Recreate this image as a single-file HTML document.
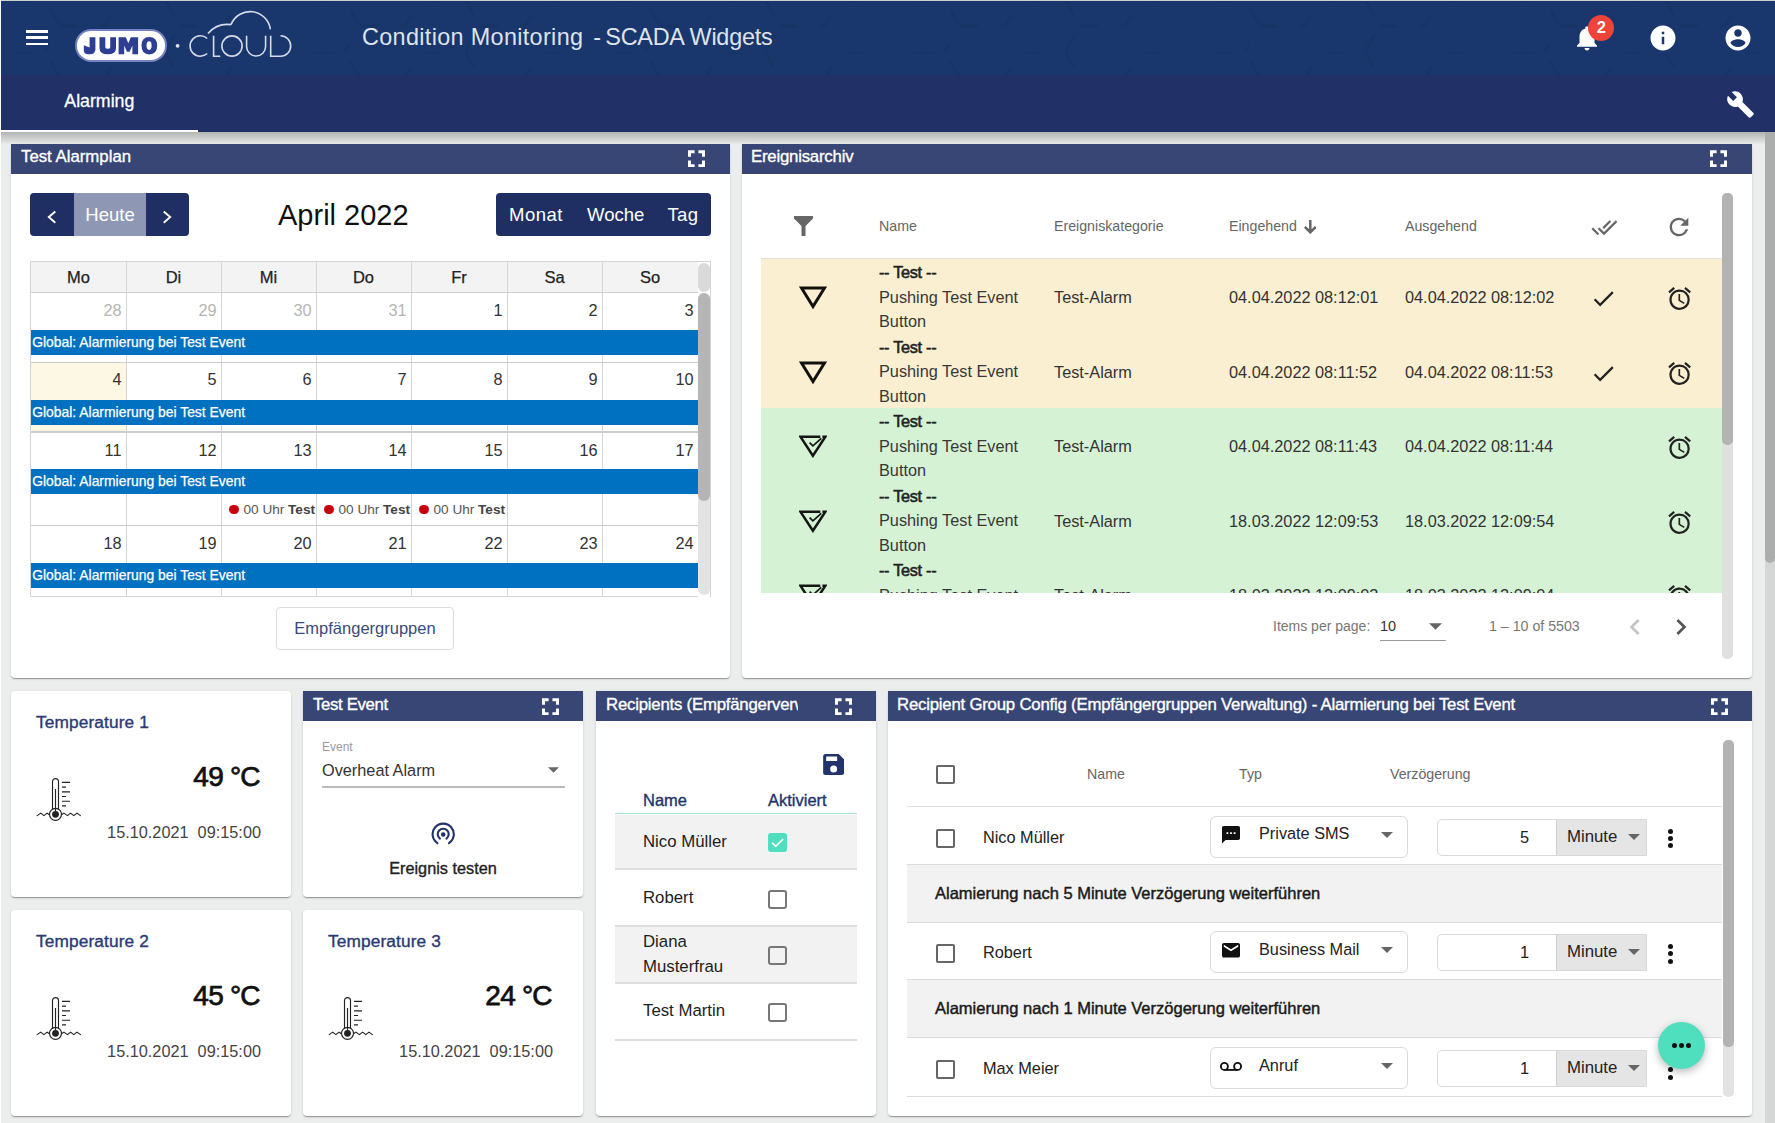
<!DOCTYPE html>
<html><head><meta charset="utf-8">
<style>
*{box-sizing:border-box;margin:0;padding:0}
html,body{width:1775px;height:1123px;overflow:hidden}
body{position:relative;background:#eceeed;font-family:"Liberation Sans",sans-serif;color:#222}
.a{position:absolute}
.t{position:absolute;white-space:nowrap}
.nav{left:0;top:0;width:1775px;height:75px;background:#19366d;border-top:1px solid #cfcfcf;border-left:1px solid #fff}
.tabs{left:0;top:75px;width:1775px;height:57px;background:#213066;border-left:1px solid #fff}
.shadow{left:1px;top:132px;width:1764px;height:12px;background:linear-gradient(#b2b3b3,#e2e3e3 90%,#eceeed)}
.card{position:absolute;background:#fff;border-radius:4px;box-shadow:0 2px 1px -1px rgba(0,0,0,.2),0 1px 1px 0 rgba(0,0,0,.14),0 1px 3px 0 rgba(0,0,0,.12)}
.ph{position:absolute;left:0;top:0;right:0;height:30px;background:#374674;border-radius:0}
.ph .tt{position:absolute;left:10px;top:0.4px;line-height:26px;color:#fff;font-size:16.8px;white-space:nowrap;letter-spacing:-0.22px;-webkit-text-stroke:0.35px #fff}
.fs{position:absolute;top:6px;width:17px;height:17.4px}
.ph2 .tt{top:0.9px}.ph2 .fs{top:6.8px;margin-left:0.8px}
</style></head><body>

<div class="a" style="left:0;top:0;width:1px;height:1123px;background:#fff;z-index:5"></div>
<div class="a nav"></div>
<svg class="a" style="left:0;top:0" width="1775" height="75">
<defs><pattern id="hex" width="300" height="52" patternUnits="userSpaceOnUse">
<path d="M15 0 L45 0 L60 26 L45 52 M60 26 L105 26 L120 0 L165 0 L180 26 L165 52 M180 26 L225 26 L240 0 L285 0" fill="none" stroke="#15305f" stroke-width="3" stroke-dasharray="18 22"/>
</pattern></defs>
<rect x="1" y="1" width="1774" height="74" fill="url(#hex)" opacity="0.4"/>
</svg>
<div class="a" style="left:25.8px;top:30.3px;width:22.2px;height:2.6px;background:#fff"></div>
<div class="a" style="left:25.8px;top:36.4px;width:22.2px;height:2.6px;background:#fff"></div>
<div class="a" style="left:25.8px;top:42.5px;width:22.2px;height:2.6px;background:#fff"></div>
<div class="a" style="left:75px;top:29px;width:92px;height:32.6px;border-radius:16.3px;background:#fff;border:2px solid #7583c0"></div>
<svg class="a" style="left:70px;top:24px" width="102" height="42" viewBox="70 24 102 42"><g fill="#2c3f92">
<path d="M89.6 37.2H95.4V49.2Q95.4 54.3 89.8 54.3H88.2Q83.8 54.3 83.8 50V45.2L89.6 47.6Z"/>
<path d="M99.5 37.2H105.3V47.2Q105.3 48.8 107.8 48.8Q110.2 48.8 110.2 47.2V37.2H116V48Q116 54.3 107.8 54.3Q99.5 54.3 99.5 48Z"/>
<path d="M118.6 54.2V37.2H125.8L128.3 43.2L130.8 37.2H138.1V54.2H132.4V45.5L129.6 51.8H127L124.2 45.5V54.2Z"/>
<path fill-rule="evenodd" d="M149.3 36.9Q157.2 36.9 157.2 45.6Q157.2 54.5 149.3 54.5Q141.5 54.5 141.5 45.6Q141.5 36.9 149.3 36.9ZM149.3 41.2Q146.5 41.2 146.5 45.6Q146.5 49.9 149.3 49.9Q151.6 49.9 151.6 45.6Q151.6 41.2 149.3 41.2Z"/>
</g></svg>
<svg class="a" style="left:170px;top:5px" width="130" height="60" viewBox="170 5 130 60">
<circle cx="177.6" cy="45.8" r="1.9" fill="#dfe4ee"/>
<g fill="none" stroke="#d5dbe8" stroke-width="1.6">
<path d="M207.2 38.5 A10.2 10.2 0 1 0 207.2 53.5"/>
<path d="M213.6 35.8 V56.2 H220.3"/>
<circle cx="232" cy="46" r="10.1"/>
<path d="M246.6 35.8 V46.5 A9.5 9.5 0 0 0 265.6 46.5 V35.8"/>
<path d="M270.7 35.8 V56.2 H280.5 A10.2 10.2 0 0 0 280.5 35.8"/>
<path d="M208 33.4 A26 26 0 0 1 231 24.6"/>
<path d="M231 24.6 A20.5 20.5 0 0 1 270.4 29.4"/>
</g>
</svg>
<div class="t" style="left:362px;top:22px;line-height:30px;font-size:23.4px;color:#dfe3ec;letter-spacing:0.34px">Condition Monitoring</div><div class="t" style="left:593.2px;top:22px;line-height:30px;font-size:23.4px;color:#dfe3ec">-</div><div class="t" style="left:605.3px;top:22px;line-height:30px;font-size:23.4px;color:#dfe3ec;letter-spacing:-0.25px">SCADA Widgets</div>
<!-- bell -->
<svg class="a" style="left:1572px;top:23px" width="30" height="30" viewBox="0 0 24 24"><path fill="#fff" d="M12 22c1.1 0 2-.9 2-2h-4c0 1.1.89 2 2 2zm6-6v-5c0-3.07-1.64-5.64-4.5-6.32V4c0-.83-.67-1.5-1.5-1.5s-1.5.67-1.5 1.5v.68C7.63 5.36 6 7.92 6 11v5l-2 2v1h16v-1l-2-2z"/></svg>
<div class="a" style="left:1588px;top:15px;width:26px;height:26px;border-radius:50%;background:#f0433a;color:#fff;font-size:16.5px;font-weight:bold;text-align:center;line-height:25px;padding-left:0.5px">2</div>
<!-- info -->
<svg class="a" style="left:1647.5px;top:23px" width="30" height="30" viewBox="0 0 24 24"><path fill="#fff" d="M12 2C6.48 2 2 6.48 2 12s4.48 10 10 10 10-4.48 10-10S17.52 2 12 2zm1 15h-2v-6h2v6zm0-8h-2V7h2v2z"/></svg>
<!-- account -->
<svg class="a" style="left:1723px;top:23px" width="30" height="30" viewBox="0 0 24 24"><path fill="#fff" d="M12 2C6.48 2 2 6.48 2 12s4.48 10 10 10 10-4.48 10-10S17.52 2 12 2zm0 3c1.66 0 3 1.34 3 3s-1.34 3-3 3-3-1.34-3-3 1.34-3 3-3zm0 14.2c-2.5 0-4.71-1.28-6-3.22.03-1.99 4-3.08 6-3.08 1.99 0 5.97 1.09 6 3.08-1.29 1.94-3.5 3.22-6 3.22z"/></svg>
<div class="a tabs"></div>
<div class="t" style="left:64.3px;top:89.3px;line-height:24px;font-size:17.75px;color:#fff;-webkit-text-stroke:0.3px #fff">Alarming</div>
<div class="a" style="left:1px;top:130px;width:197px;height:2px;background:#fff"></div>
<!-- wrench -->
<svg class="a" style="left:1726px;top:89.7px" width="29" height="29" viewBox="0 0 24 24"><path fill="#fff" d="M22.7 19l-9.1-9.1c.9-2.3.4-5-1.5-6.9-2-2-5-2.4-7.4-1.3L9 6 6 9 1.6 4.7C.4 7.1.9 10.1 2.9 12.1c1.9 1.9 4.6 2.4 6.9 1.5l9.1 9.1c.4.4 1 .4 1.4 0l2.3-2.3c.5-.4.5-1.1.1-1.4z"/></svg>
<div class="a shadow"></div>

<div class="card" style="left:11px;top:144px;width:719px;height:534px">
<div class="ph"><div class="tt" style="letter-spacing:0">Test Alarmplan</div><svg class="fs" style="left:677px" viewBox="0 0 17 17"><path fill="#fff" d="M0 0h6.6v3H3v3.6H0zM10.4 0H17v6.6h-3V3h-3.6zM0 10.4h3V14h3.6v3H0zM14 10.4h3V17h-6.6v-3H14z"/></svg></div>
<div class="a" style="left:19px;top:49px;width:159px;height:43px;border-radius:4px;overflow:hidden;background:#202f63"><div class="a" style="left:44px;top:0;width:72px;height:43px;background:#8e98b4"></div><svg class="a" style="left:0;top:0" width="44" height="43"><path d="M25.3 18.5L18.8 24L25.3 29.7" fill="none" stroke="#fff" stroke-width="1.9"/></svg><div class="t" style="left:44px;width:72px;top:0;line-height:43px;text-align:center;color:#fff;font-size:18.5px">Heute</div><svg class="a" style="left:116px;top:0" width="43" height="43"><path d="M17.7 18.5L24.2 24L17.7 29.7" fill="none" stroke="#fff" stroke-width="1.9"/></svg></div>
<div class="t" style="left:267px;top:52.5px;line-height:36px;font-size:29px;color:#111">April 2022</div>
<div class="a" style="left:485px;top:49px;width:215px;height:43px;border-radius:4px;background:#202f63;color:#fff;font-size:18.5px"><div class="t" style="left:13px;top:0;line-height:43px;letter-spacing:0.5px">Monat</div><div class="t" style="left:91px;top:0;line-height:43px">Woche</div><div class="t" style="left:171.5px;top:0;line-height:43px;letter-spacing:0.3px">Tag</div></div>
<div class="a" style="left:19px;top:117px;width:681px;height:336px;overflow:hidden">
<div class="a" style="left:0;top:0;width:681px;height:1px;background:#d4d4d4"></div>
<div class="a" style="left:0;top:0;width:1px;height:336px;background:#d4d4d4"></div>
<div class="a" style="left:680px;top:1px;width:1px;height:335px;background:#d4d4d4"></div>
<div class="a" style="left:0;top:335px;width:681px;height:1px;background:#d4d4d4"></div>
<div class="a" style="left:1px;top:1px;width:667px;height:30px;background:#f3f3f3"></div>
<div class="a" style="left:1px;top:31px;width:667px;height:1px;background:#d0d0d0"></div>
<div class="t" style="left:1px;width:95px;top:1px;line-height:30px;text-align:center;font-size:16.5px;color:#222;-webkit-text-stroke:0.25px #222">Mo</div>
<div class="t" style="left:96px;width:95px;top:1px;line-height:30px;text-align:center;font-size:16.5px;color:#222;-webkit-text-stroke:0.25px #222">Di</div>
<div class="t" style="left:191px;width:95px;top:1px;line-height:30px;text-align:center;font-size:16.5px;color:#222;-webkit-text-stroke:0.25px #222">Mi</div>
<div class="t" style="left:286px;width:95px;top:1px;line-height:30px;text-align:center;font-size:16.5px;color:#222;-webkit-text-stroke:0.25px #222">Do</div>
<div class="t" style="left:381px;width:96px;top:1px;line-height:30px;text-align:center;font-size:16.5px;color:#222;-webkit-text-stroke:0.25px #222">Fr</div>
<div class="t" style="left:477px;width:95px;top:1px;line-height:30px;text-align:center;font-size:16.5px;color:#222;-webkit-text-stroke:0.25px #222">Sa</div>
<div class="t" style="left:572px;width:96px;top:1px;line-height:30px;text-align:center;font-size:16.5px;color:#222;-webkit-text-stroke:0.25px #222">So</div>
<div class="a" style="left:96.0px;top:1px;width:1px;height:335px;background:#d6d6d6"></div>
<div class="a" style="left:191.0px;top:1px;width:1px;height:335px;background:#d6d6d6"></div>
<div class="a" style="left:286.0px;top:1px;width:1px;height:335px;background:#d6d6d6"></div>
<div class="a" style="left:381.0px;top:1px;width:1px;height:335px;background:#d6d6d6"></div>
<div class="a" style="left:477.0px;top:1px;width:1px;height:335px;background:#d6d6d6"></div>
<div class="a" style="left:572.0px;top:1px;width:1px;height:335px;background:#d6d6d6"></div>
<div class="t" style="left:1px;width:90.5px;top:37.6px;line-height:22px;text-align:right;font-size:16.3px;color:#b5b5b5">28</div>
<div class="t" style="left:96px;width:90.5px;top:37.6px;line-height:22px;text-align:right;font-size:16.3px;color:#b5b5b5">29</div>
<div class="t" style="left:191px;width:90.5px;top:37.6px;line-height:22px;text-align:right;font-size:16.3px;color:#b5b5b5">30</div>
<div class="t" style="left:286px;width:90.5px;top:37.6px;line-height:22px;text-align:right;font-size:16.3px;color:#b5b5b5">31</div>
<div class="t" style="left:381px;width:91.5px;top:37.6px;line-height:22px;text-align:right;font-size:16.3px;color:#333">1</div>
<div class="t" style="left:477px;width:90.5px;top:37.6px;line-height:22px;text-align:right;font-size:16.3px;color:#333">2</div>
<div class="t" style="left:572px;width:91.5px;top:37.6px;line-height:22px;text-align:right;font-size:16.3px;color:#333">3</div>
<div class="a" style="left:1px;top:69.0px;width:667px;height:25.2px;background:#0070c0"><div class="t" style="left:1.2px;top:0;line-height:25px;font-size:13.9px;color:#fff;-webkit-text-stroke:0.25px #fff">Global: Alarmierung bei Test Event</div></div>
<div class="a" style="left:1px;top:102px;width:95px;height:68px;background:#fcf8e3"></div>
<div class="a" style="left:1px;top:101px;width:667px;height:1px;background:#cdcdcd"></div>
<div class="t" style="left:1px;width:90.5px;top:107.3px;line-height:22px;text-align:right;font-size:16.3px;color:#333">4</div>
<div class="t" style="left:96px;width:90.5px;top:107.3px;line-height:22px;text-align:right;font-size:16.3px;color:#333">5</div>
<div class="t" style="left:191px;width:90.5px;top:107.3px;line-height:22px;text-align:right;font-size:16.3px;color:#333">6</div>
<div class="t" style="left:286px;width:90.5px;top:107.3px;line-height:22px;text-align:right;font-size:16.3px;color:#333">7</div>
<div class="t" style="left:381px;width:91.5px;top:107.3px;line-height:22px;text-align:right;font-size:16.3px;color:#333">8</div>
<div class="t" style="left:477px;width:90.5px;top:107.3px;line-height:22px;text-align:right;font-size:16.3px;color:#333">9</div>
<div class="t" style="left:572px;width:91.5px;top:107.3px;line-height:22px;text-align:right;font-size:16.3px;color:#333">10</div>
<div class="a" style="left:1px;top:138.6px;width:667px;height:25.2px;background:#0070c0"><div class="t" style="left:1.2px;top:0;line-height:25px;font-size:13.9px;color:#fff;-webkit-text-stroke:0.25px #fff">Global: Alarmierung bei Test Event</div></div>
<div class="a" style="left:1px;top:170px;width:667px;height:2px;background:#cdcdcd"></div>
<div class="t" style="left:1px;width:90.5px;top:178.0px;line-height:22px;text-align:right;font-size:16.3px;color:#333">11</div>
<div class="t" style="left:96px;width:90.5px;top:178.0px;line-height:22px;text-align:right;font-size:16.3px;color:#333">12</div>
<div class="t" style="left:191px;width:90.5px;top:178.0px;line-height:22px;text-align:right;font-size:16.3px;color:#333">13</div>
<div class="t" style="left:286px;width:90.5px;top:178.0px;line-height:22px;text-align:right;font-size:16.3px;color:#333">14</div>
<div class="t" style="left:381px;width:91.5px;top:178.0px;line-height:22px;text-align:right;font-size:16.3px;color:#333">15</div>
<div class="t" style="left:477px;width:90.5px;top:178.0px;line-height:22px;text-align:right;font-size:16.3px;color:#333">16</div>
<div class="t" style="left:572px;width:91.5px;top:178.0px;line-height:22px;text-align:right;font-size:16.3px;color:#333">17</div>
<div class="a" style="left:1px;top:208.1px;width:667px;height:25.2px;background:#0070c0"><div class="t" style="left:1.2px;top:0;line-height:25px;font-size:13.9px;color:#fff;-webkit-text-stroke:0.25px #fff">Global: Alarmierung bei Test Event</div></div>
<div class="a" style="left:1px;top:264px;width:667px;height:1px;background:#cdcdcd"></div>
<div class="t" style="left:1px;width:90.5px;top:270.7px;line-height:22px;text-align:right;font-size:16.3px;color:#333">18</div>
<div class="t" style="left:96px;width:90.5px;top:270.7px;line-height:22px;text-align:right;font-size:16.3px;color:#333">19</div>
<div class="t" style="left:191px;width:90.5px;top:270.7px;line-height:22px;text-align:right;font-size:16.3px;color:#333">20</div>
<div class="t" style="left:286px;width:90.5px;top:270.7px;line-height:22px;text-align:right;font-size:16.3px;color:#333">21</div>
<div class="t" style="left:381px;width:91.5px;top:270.7px;line-height:22px;text-align:right;font-size:16.3px;color:#333">22</div>
<div class="t" style="left:477px;width:90.5px;top:270.7px;line-height:22px;text-align:right;font-size:16.3px;color:#333">23</div>
<div class="t" style="left:572px;width:91.5px;top:270.7px;line-height:22px;text-align:right;font-size:16.3px;color:#333">24</div>
<div class="a" style="left:1px;top:301.7px;width:667px;height:25.2px;background:#0070c0"><div class="t" style="left:1.2px;top:0;line-height:25px;font-size:13.9px;color:#fff;-webkit-text-stroke:0.25px #fff">Global: Alarmierung bei Test Event</div></div>
<div class="t" style="left:191px;top:240px;line-height:18px;font-size:13.6px;color:#555"><span style="display:inline-block;width:9.5px;height:9.5px;border-radius:50%;background:#c8000b;margin:0 5px 0 8px;vertical-align:0px"></span>00 Uhr <b style="color:#444">Test</b></div>
<div class="t" style="left:286px;top:240px;line-height:18px;font-size:13.6px;color:#555"><span style="display:inline-block;width:9.5px;height:9.5px;border-radius:50%;background:#c8000b;margin:0 5px 0 8px;vertical-align:0px"></span>00 Uhr <b style="color:#444">Test</b></div>
<div class="t" style="left:381px;top:240px;line-height:18px;font-size:13.6px;color:#555"><span style="display:inline-block;width:9.5px;height:9.5px;border-radius:50%;background:#c8000b;margin:0 5px 0 8px;vertical-align:0px"></span>00 Uhr <b style="color:#444">Test</b></div>
<div class="a" style="left:668px;top:1px;width:12px;height:335px;background:#fff"></div>
<div class="a" style="left:668px;top:2px;width:12px;height:29px;border-radius:6px;background:#dadada"></div>
<div class="a" style="left:668px;top:32px;width:12px;height:302px;border-radius:6px;background:#e3e3e3"></div>
<div class="a" style="left:668px;top:32px;width:12px;height:208px;border-radius:6px;background:#b5b5b5"></div>
</div>
<div class="a" style="left:265px;top:463px;width:178px;height:43px;border:1px solid #dcdcdc;border-radius:4px"><div class="t" style="left:0;width:176px;text-align:center;top:0;line-height:41px;font-size:16.5px;color:#3a4a7e">Empfängergruppen</div></div>
</div>
<div class="card" style="left:742px;top:144px;width:1010px;height:534px">
<div class="ph"><div class="tt" style="left:9px">Ereignisarchiv</div><svg class="fs" style="left:968px" viewBox="0 0 17 17"><path fill="#fff" d="M0 0h6.6v3H3v3.6H0zM10.4 0H17v6.6h-3V3h-3.6zM0 10.4h3V14h3.6v3H0zM14 10.4h3V17h-6.6v-3H14z"/></svg></div>
<svg class="a" style="left:52px;top:72px" width="19" height="20" viewBox="0 0 19 20"><path fill="#666" d="M0 0h19v2.5L11.5 10v10h-4V10L0 2.5z"/></svg>
<div class="t" style="left:137px;top:72px;line-height:20px;font-size:14.2px;color:#666">Name</div>
<div class="t" style="left:312px;top:72px;line-height:20px;font-size:14.2px;color:#666">Ereigniskategorie</div>
<div class="t" style="left:487px;top:72px;line-height:20px;font-size:14.2px;color:#666">Eingehend</div>
<div class="t" style="left:663px;top:72px;line-height:20px;font-size:14.2px;color:#666">Ausgehend</div>
<svg class="a" style="left:561.6px;top:76.3px" width="12.6" height="14.2" viewBox="0 0 12.6 14.2"><path fill="#666" d="M5.05 0H7.55V9.3L10.9 6L12.6 7.8L6.3 14.1L0 7.8L1.7 6L5.05 9.3Z"/></svg>
<svg class="a" style="left:848.5px;top:69.7px" width="26.8" height="26.8" viewBox="0 0 24 24"><path fill="#666" d="M18 7l-1.41-1.41-6.34 6.34 1.41 1.41L18 7zm4.24-1.41L11.66 16.17 7.48 12l-1.41 1.41L11.66 19l12-12-1.42-1.41zM.41 13.41L6 19l1.41-1.41L1.83 12 .41 13.41z"/></svg>
<svg class="a" style="left:923.4px;top:68.9px" width="28" height="28" viewBox="0 0 24 24"><path fill="#666" d="M17.65 6.35A7.958 7.958 0 0 0 12 4c-4.42 0-7.99 3.58-7.99 8s3.57 8 7.99 8c3.73 0 6.84-2.55 7.73-6h-2.08A5.99 5.99 0 0 1 12 18c-3.31 0-6-2.69-6-6s2.69-6 6-6c1.66 0 3.14.69 4.22 1.78L13 11h7V4l-2.35 2.35z"/></svg>
<div class="a" style="left:19px;top:114px;width:961px;height:1px;background:#e0e0e0"></div>
<div class="a" style="left:19px;top:115px;width:961px;height:334px;overflow:hidden">
<div class="a" style="left:0;top:0.0px;width:961px;height:74.5px;background:#faefd1">
<svg class="a" style="left:38px;top:27px" width="28" height="23" viewBox="0 0 28 23"><path fill="none" stroke="#111" stroke-width="3" stroke-linejoin="miter" d="M2.5 2H25.5L14 20.5Z"/></svg>
<div class="t" style="left:118px;top:1px;line-height:24.7px;font-size:16.3px;color:#383838"><span style="color:#222;letter-spacing:-0.3px;-webkit-text-stroke:0.55px #222">-- Test --</span><br>Pushing Test Event<br>Button</div>
<div class="t" style="left:293px;top:26px;line-height:24px;font-size:16.3px;color:#333">Test-Alarm</div>
<div class="t" style="left:468px;top:26px;line-height:24px;font-size:16.3px;color:#333">04.04.2022 08:12:01</div>
<div class="t" style="left:644px;top:26px;line-height:24px;font-size:16.3px;color:#333">04.04.2022 08:12:02</div>
<svg class="a" style="left:829.4px;top:26.1px" width="27" height="27" viewBox="0 0 24 24"><path fill="#222" d="M9 16.17L4.83 12l-1.42 1.41L9 19 21 7l-1.41-1.41z"/></svg>
<svg class="a" style="left:904.9px;top:26px" width="27.2" height="27.2" viewBox="0 0 24 24"><path fill="#222" d="M22 5.72l-4.6-3.86-1.29 1.53 4.6 3.86L22 5.72zM7.88 3.39L6.6 1.86 2 5.71l1.29 1.53 4.59-3.85zM12.5 8H11v6l4.75 2.85.75-1.23-4-2.37V8zM12 4c-4.97 0-9 4.03-9 9s4.02 9 9 9a9 9 0 0 0 0-18zm0 16c-3.87 0-7-3.13-7-7s3.13-7 7-7 7 3.13 7 7-3.13 7-7 7z"/></svg>
</div>
<div class="a" style="left:0;top:74.5px;width:961px;height:74.5px;background:#faefd1">
<svg class="a" style="left:38px;top:27px" width="28" height="23" viewBox="0 0 28 23"><path fill="none" stroke="#111" stroke-width="3" stroke-linejoin="miter" d="M2.5 2H25.5L14 20.5Z"/></svg>
<div class="t" style="left:118px;top:1px;line-height:24.7px;font-size:16.3px;color:#383838"><span style="color:#222;letter-spacing:-0.3px;-webkit-text-stroke:0.55px #222">-- Test --</span><br>Pushing Test Event<br>Button</div>
<div class="t" style="left:293px;top:26px;line-height:24px;font-size:16.3px;color:#333">Test-Alarm</div>
<div class="t" style="left:468px;top:26px;line-height:24px;font-size:16.3px;color:#333">04.04.2022 08:11:52</div>
<div class="t" style="left:644px;top:26px;line-height:24px;font-size:16.3px;color:#333">04.04.2022 08:11:53</div>
<svg class="a" style="left:829.4px;top:26.1px" width="27" height="27" viewBox="0 0 24 24"><path fill="#222" d="M9 16.17L4.83 12l-1.42 1.41L9 19 21 7l-1.41-1.41z"/></svg>
<svg class="a" style="left:904.9px;top:26px" width="27.2" height="27.2" viewBox="0 0 24 24"><path fill="#222" d="M22 5.72l-4.6-3.86-1.29 1.53 4.6 3.86L22 5.72zM7.88 3.39L6.6 1.86 2 5.71l1.29 1.53 4.59-3.85zM12.5 8H11v6l4.75 2.85.75-1.23-4-2.37V8zM12 4c-4.97 0-9 4.03-9 9s4.02 9 9 9a9 9 0 0 0 0-18zm0 16c-3.87 0-7-3.13-7-7s3.13-7 7-7 7 3.13 7 7-3.13 7-7 7z"/></svg>
</div>
<div class="a" style="left:0;top:149.0px;width:961px;height:74.5px;background:#d5f2d5">
<svg class="a" style="left:38px;top:27px" width="28" height="23" viewBox="0 0 28 23"><path fill="none" stroke="#151515" stroke-width="2.5" stroke-linejoin="miter" d="M21.3 1.7H1.4L13.9 20.8L26.4 1.7H23.4"/><path fill="none" stroke="#151515" stroke-width="1.7" d="M10.6 7.6L13.9 10.9L22.3 3.3"/></svg>
<div class="t" style="left:118px;top:1px;line-height:24.7px;font-size:16.3px;color:#383838"><span style="color:#222;letter-spacing:-0.3px;-webkit-text-stroke:0.55px #222">-- Test --</span><br>Pushing Test Event<br>Button</div>
<div class="t" style="left:293px;top:26px;line-height:24px;font-size:16.3px;color:#333">Test-Alarm</div>
<div class="t" style="left:468px;top:26px;line-height:24px;font-size:16.3px;color:#333">04.04.2022 08:11:43</div>
<div class="t" style="left:644px;top:26px;line-height:24px;font-size:16.3px;color:#333">04.04.2022 08:11:44</div>
<svg class="a" style="left:904.9px;top:26px" width="27.2" height="27.2" viewBox="0 0 24 24"><path fill="#222" d="M22 5.72l-4.6-3.86-1.29 1.53 4.6 3.86L22 5.72zM7.88 3.39L6.6 1.86 2 5.71l1.29 1.53 4.59-3.85zM12.5 8H11v6l4.75 2.85.75-1.23-4-2.37V8zM12 4c-4.97 0-9 4.03-9 9s4.02 9 9 9a9 9 0 0 0 0-18zm0 16c-3.87 0-7-3.13-7-7s3.13-7 7-7 7 3.13 7 7-3.13 7-7 7z"/></svg>
</div>
<div class="a" style="left:0;top:223.5px;width:961px;height:74.5px;background:#d5f2d5">
<svg class="a" style="left:38px;top:27px" width="28" height="23" viewBox="0 0 28 23"><path fill="none" stroke="#151515" stroke-width="2.5" stroke-linejoin="miter" d="M21.3 1.7H1.4L13.9 20.8L26.4 1.7H23.4"/><path fill="none" stroke="#151515" stroke-width="1.7" d="M10.6 7.6L13.9 10.9L22.3 3.3"/></svg>
<div class="t" style="left:118px;top:1px;line-height:24.7px;font-size:16.3px;color:#383838"><span style="color:#222;letter-spacing:-0.3px;-webkit-text-stroke:0.55px #222">-- Test --</span><br>Pushing Test Event<br>Button</div>
<div class="t" style="left:293px;top:26px;line-height:24px;font-size:16.3px;color:#333">Test-Alarm</div>
<div class="t" style="left:468px;top:26px;line-height:24px;font-size:16.3px;color:#333">18.03.2022 12:09:53</div>
<div class="t" style="left:644px;top:26px;line-height:24px;font-size:16.3px;color:#333">18.03.2022 12:09:54</div>
<svg class="a" style="left:904.9px;top:26px" width="27.2" height="27.2" viewBox="0 0 24 24"><path fill="#222" d="M22 5.72l-4.6-3.86-1.29 1.53 4.6 3.86L22 5.72zM7.88 3.39L6.6 1.86 2 5.71l1.29 1.53 4.59-3.85zM12.5 8H11v6l4.75 2.85.75-1.23-4-2.37V8zM12 4c-4.97 0-9 4.03-9 9s4.02 9 9 9a9 9 0 0 0 0-18zm0 16c-3.87 0-7-3.13-7-7s3.13-7 7-7 7 3.13 7 7-3.13 7-7 7z"/></svg>
</div>
<div class="a" style="left:0;top:298.0px;width:961px;height:74.5px;background:#d5f2d5">
<svg class="a" style="left:38px;top:27px" width="28" height="23" viewBox="0 0 28 23"><path fill="none" stroke="#151515" stroke-width="2.5" stroke-linejoin="miter" d="M21.3 1.7H1.4L13.9 20.8L26.4 1.7H23.4"/><path fill="none" stroke="#151515" stroke-width="1.7" d="M10.6 7.6L13.9 10.9L22.3 3.3"/></svg>
<div class="t" style="left:118px;top:1px;line-height:24.7px;font-size:16.3px;color:#383838"><span style="color:#222;letter-spacing:-0.3px;-webkit-text-stroke:0.55px #222">-- Test --</span><br>Pushing Test Event<br>Button</div>
<div class="t" style="left:293px;top:26px;line-height:24px;font-size:16.3px;color:#333">Test-Alarm</div>
<div class="t" style="left:468px;top:26px;line-height:24px;font-size:16.3px;color:#333">18.03.2022 12:09:03</div>
<div class="t" style="left:644px;top:26px;line-height:24px;font-size:16.3px;color:#333">18.03.2022 12:09:04</div>
<svg class="a" style="left:904.9px;top:26px" width="27.2" height="27.2" viewBox="0 0 24 24"><path fill="#222" d="M22 5.72l-4.6-3.86-1.29 1.53 4.6 3.86L22 5.72zM7.88 3.39L6.6 1.86 2 5.71l1.29 1.53 4.59-3.85zM12.5 8H11v6l4.75 2.85.75-1.23-4-2.37V8zM12 4c-4.97 0-9 4.03-9 9s4.02 9 9 9a9 9 0 0 0 0-18zm0 16c-3.87 0-7-3.13-7-7s3.13-7 7-7 7 3.13 7 7-3.13 7-7 7z"/></svg>
</div>
</div>
<div class="a" style="left:980px;top:49px;width:11px;height:466px;border-radius:5px;background:#e0e0e0"></div>
<div class="a" style="left:980px;top:49px;width:11px;height:252px;border-radius:5px;background:#b3b3b3"></div>
<div class="t" style="left:531px;top:472px;line-height:20px;font-size:14px;color:#777">Items per page:</div>
<div class="t" style="left:638px;top:472px;line-height:20px;font-size:14.5px;color:#333">10</div>
<svg class="a" style="left:687px;top:479px" width="13" height="7" viewBox="0 0 10 5"><path fill="#666" d="M0 0l5 5 5-5z"/></svg>
<div class="a" style="left:638px;top:496px;width:66px;height:1px;background:#999"></div>
<div class="t" style="left:747px;top:472px;line-height:20px;font-size:14.2px;color:#777">1 &#8211; 10 of 5503</div>
<svg class="a" style="left:876.7px;top:466.6px" width="32" height="32" viewBox="0 0 24 24"><path fill="#c4c4c4" d="M15.41 7.41L14 6l-6 6 6 6 1.41-1.41L10.83 12z"/></svg>
<svg class="a" style="left:923px;top:466.6px" width="32" height="32" viewBox="0 0 24 24"><path fill="#555" d="M10 6L8.59 7.41 13.17 12l-4.58 4.59L10 18l6-6z"/></svg>
</div>
<div class="a" style="left:1765px;top:132px;width:10px;height:991px;background:#d6d6d6"></div><div class="a" style="left:1765px;top:132px;width:10px;height:431px;border-radius:0 0 5px 5px;background:#adadad"></div>
<div class="card" style="left:11px;top:691px;width:280px;height:206px"><div class="t" style="left:25px;top:19.2px;line-height:24px;font-size:17.3px;letter-spacing:0.12px;color:#2a3a73;-webkit-text-stroke:0.35px #2a3a73">Temperature 1</div><svg class="a" style="left:25px;top:87px" width="46" height="44" viewBox="0 0 46 44">
<g fill="none" stroke="#222" stroke-width="1.15">
<path d="M16.5 31.4V3.6a3 3 0 0 1 6 0V31.4"/>
<circle cx="19.5" cy="36.3" r="6"/>
<path d="M19.5 11v22"/>
<path d="M26 4.4h8M26 9.1h4M26 13.8h8M26 18.5h4M26 23.2h8M26 27.9h4"/>
<path stroke-linejoin="round" stroke-linecap="round" d="M1.2 37.6L4.7 35.1L7.9 37.6L11.1 35.1L12.6 36.3 M26.2 36.3L27.9 35.1L31.4 37.6L34.6 35.1L37.8 37.6L41 35.1L44.4 37.6"/>
</g>
<circle cx="19.5" cy="36.3" r="3.4" fill="#222"/>
</svg><div class="t" style="right:31.3px;top:68px;line-height:36px;font-size:28px;letter-spacing:-0.8px;color:#111;-webkit-text-stroke:0.75px #111">49 °C</div><div class="t" style="right:30px;top:130px;line-height:22px;font-size:16.3px;color:#444">15.10.2021&nbsp; 09:15:00</div></div>
<div class="card" style="left:11px;top:910px;width:280px;height:206px"><div class="t" style="left:25px;top:19.2px;line-height:24px;font-size:17.3px;letter-spacing:0.12px;color:#2a3a73;-webkit-text-stroke:0.35px #2a3a73">Temperature 2</div><svg class="a" style="left:25px;top:87px" width="46" height="44" viewBox="0 0 46 44">
<g fill="none" stroke="#222" stroke-width="1.15">
<path d="M16.5 31.4V3.6a3 3 0 0 1 6 0V31.4"/>
<circle cx="19.5" cy="36.3" r="6"/>
<path d="M19.5 11v22"/>
<path d="M26 4.4h8M26 9.1h4M26 13.8h8M26 18.5h4M26 23.2h8M26 27.9h4"/>
<path stroke-linejoin="round" stroke-linecap="round" d="M1.2 37.6L4.7 35.1L7.9 37.6L11.1 35.1L12.6 36.3 M26.2 36.3L27.9 35.1L31.4 37.6L34.6 35.1L37.8 37.6L41 35.1L44.4 37.6"/>
</g>
<circle cx="19.5" cy="36.3" r="3.4" fill="#222"/>
</svg><div class="t" style="right:31.3px;top:68px;line-height:36px;font-size:28px;letter-spacing:-0.8px;color:#111;-webkit-text-stroke:0.75px #111">45 °C</div><div class="t" style="right:30px;top:130px;line-height:22px;font-size:16.3px;color:#444">15.10.2021&nbsp; 09:15:00</div></div>
<div class="card" style="left:303px;top:910px;width:280px;height:206px"><div class="t" style="left:25px;top:19.2px;line-height:24px;font-size:17.3px;letter-spacing:0.12px;color:#2a3a73;-webkit-text-stroke:0.35px #2a3a73">Temperature 3</div><svg class="a" style="left:25px;top:87px" width="46" height="44" viewBox="0 0 46 44">
<g fill="none" stroke="#222" stroke-width="1.15">
<path d="M16.5 31.4V3.6a3 3 0 0 1 6 0V31.4"/>
<circle cx="19.5" cy="36.3" r="6"/>
<path d="M19.5 11v22"/>
<path d="M26 4.4h8M26 9.1h4M26 13.8h8M26 18.5h4M26 23.2h8M26 27.9h4"/>
<path stroke-linejoin="round" stroke-linecap="round" d="M1.2 37.6L4.7 35.1L7.9 37.6L11.1 35.1L12.6 36.3 M26.2 36.3L27.9 35.1L31.4 37.6L34.6 35.1L37.8 37.6L41 35.1L44.4 37.6"/>
</g>
<circle cx="19.5" cy="36.3" r="3.4" fill="#222"/>
</svg><div class="t" style="right:31.3px;top:68px;line-height:36px;font-size:28px;letter-spacing:-0.8px;color:#111;-webkit-text-stroke:0.75px #111">24 °C</div><div class="t" style="right:30px;top:130px;line-height:22px;font-size:16.3px;color:#444">15.10.2021&nbsp; 09:15:00</div></div>
<div class="card" style="left:303px;top:691px;width:280px;height:206px">
<div class="ph ph2"><div class="tt" style="letter-spacing:-0.35px">Test Event</div><svg class="fs" style="left:238px" viewBox="0 0 17 17"><path fill="#fff" d="M0 0h6.6v3H3v3.6H0zM10.4 0H17v6.6h-3V3h-3.6zM0 10.4h3V14h3.6v3H0zM14 10.4h3V17h-6.6v-3H14z"/></svg></div>
<div class="t" style="left:19px;top:49px;line-height:14px;font-size:12px;color:#999">Event</div>
<div class="t" style="left:19px;top:68px;line-height:22px;font-size:16.3px;color:#333">Overheat Alarm</div>
<svg class="a" style="left:245px;top:76px" width="11" height="6" viewBox="0 0 10 5"><path fill="#666" d="M0 0l5 5 5-5z"/></svg>
<div class="a" style="left:19px;top:95px;width:243px;height:1.5px;background:#bbb"></div>
<svg class="a" style="left:127.6px;top:130.5px" width="24" height="24" viewBox="0 0 24 24"><g fill="none" stroke="#22336b" stroke-width="2.1" stroke-linecap="round"><path d="M6.4 21.1A10.6 10.6 0 1 1 18 21.1"/><path d="M8.9 16.6A5.5 5.5 0 1 1 15.5 16.6"/></g><circle cx="12.2" cy="12.5" r="2.3" fill="#22336b"/></svg>
<div class="t" style="left:0;width:280px;text-align:center;top:166px;line-height:22px;font-size:16.3px;color:#222;-webkit-text-stroke:0.35px #222">Ereignis testen</div>
</div>
<div class="card" style="left:596px;top:691px;width:280px;height:425px">
<div class="ph ph2" style="overflow:hidden"><div class="tt" style="width:192px;overflow:hidden">Recipients (Empfängerverwaltung)</div><svg class="fs" style="left:238px" viewBox="0 0 17 17"><path fill="#fff" d="M0 0h6.6v3H3v3.6H0zM10.4 0H17v6.6h-3V3h-3.6zM0 10.4h3V14h3.6v3H0zM14 10.4h3V17h-6.6v-3H14z"/></svg></div>
<svg class="a" style="left:227px;top:63.4px" width="21.3" height="21" viewBox="0 0 21 21"><path fill="#22336b" d="M15.5 0H2.3C1 0 0 1 0 2.3v16.4C0 20 1 21 2.3 21h16.4c1.3 0 2.3-1 2.3-2.3V5.5L15.5 0zM10.5 18.5a3.5 3.5 0 1 1 0-7 3.5 3.5 0 0 1 0 7zM14 7H3V2.5h11V7z"/></svg>
<div class="t" style="left:47px;top:98px;line-height:22px;font-size:16.5px;color:#22336b;-webkit-text-stroke:0.35px #22336b">Name</div>
<div class="t" style="left:172px;top:98px;line-height:22px;font-size:16.5px;color:#22336b;-webkit-text-stroke:0.35px #22336b">Aktiviert</div>
<div class="a" style="left:19px;top:121.8px;width:242px;height:1.6px;background:#a9e6d8"></div>
<div class="a" style="left:19px;top:124px;width:242px;height:55px;background:#f2f2f2;border-bottom:2px solid #dedede"></div>
<div class="t" style="left:47px;top:140.3px;line-height:22px;font-size:16.8px;color:#1d1d1d">Nico Müller</div>
<div class="a" style="left:172px;top:142px;width:19px;height:19px;border-radius:3px;background:#4fdfbf"><svg class="a" style="left:1px;top:1px" width="17" height="17" viewBox="0 0 24 24"><path fill="none" stroke="#fff" stroke-width="2.3" d="M4.5 12.5l5 5L20 7"/></svg></div>
<div class="a" style="left:19px;top:179px;width:242px;height:57px;background:#fff;border-bottom:2px solid #dedede"></div>
<div class="t" style="left:47px;top:196px;line-height:22px;font-size:16.8px;color:#1d1d1d">Robert</div>
<div class="a" style="left:172px;top:198.7px;width:19px;height:19px;border-radius:3px;border:2px solid #777"></div>
<div class="a" style="left:19px;top:236px;width:242px;height:57px;background:#f2f2f2;border-bottom:2px solid #dedede"></div>
<div class="t" style="left:47px;top:239.1px;line-height:24.6px;font-size:16.8px;color:#1d1d1d">Diana<br>Musterfrau</div>
<div class="a" style="left:172px;top:255px;width:19px;height:19px;border-radius:3px;border:2px solid #777"></div>
<div class="a" style="left:19px;top:293px;width:242px;height:57px;background:#fff;border-bottom:2px solid #dedede"></div>
<div class="t" style="left:47px;top:309.4px;line-height:22px;font-size:16.8px;color:#1d1d1d">Test Martin</div>
<div class="a" style="left:172px;top:312px;width:19px;height:19px;border-radius:3px;border:2px solid #777"></div>
</div>
<div class="card" style="left:888px;top:691px;width:864px;height:425px">
<div class="ph ph2"><div class="tt" style="left:9px">Recipient Group Config (Empfängergruppen Verwaltung) - Alarmierung bei Test Event</div><svg class="fs" style="left:822px" viewBox="0 0 17 17"><path fill="#fff" d="M0 0h6.6v3H3v3.6H0zM10.4 0H17v6.6h-3V3h-3.6zM0 10.4h3V14h3.6v3H0zM14 10.4h3V17h-6.6v-3H14z"/></svg></div>
<div class="a" style="left:48.0px;top:74.0px;width:19px;height:19px;border-radius:2px;border:2px solid #666"></div>
<div class="t" style="left:199px;top:73px;line-height:20px;font-size:14.2px;color:#666">Name</div>
<div class="t" style="left:351px;top:73px;line-height:20px;font-size:14.2px;color:#666">Typ</div>
<div class="t" style="left:502px;top:73px;line-height:20px;font-size:14.2px;color:#666">Verzögerung</div>
<div class="a" style="left:19px;top:115px;width:815px;height:1px;background:#e0e0e0"></div>
<div class="a" style="left:19px;top:116px;width:815px;height:290px;overflow:hidden">
<div class="a" style="left:0;top:58px;width:815px;height:58px;background:#f2f2f2;border-bottom:1px solid #dcdcdc"></div>
<div class="t" style="left:28px;top:75.4px;line-height:22px;font-size:16.5px;color:#1a1a1a;-webkit-text-stroke:0.45px #1a1a1a">Alamierung nach 5 Minute Verzögerung weiterführen</div>
<div class="a" style="left:0;top:173px;width:815px;height:58px;background:#f2f2f2;border-bottom:1px solid #dcdcdc"></div>
<div class="t" style="left:28px;top:190.4px;line-height:22px;font-size:16.5px;color:#1a1a1a;-webkit-text-stroke:0.45px #1a1a1a">Alamierung nach 1 Minute Verzögerung weiterführen</div>
<div class="a" style="left:0;top:0px;width:815px;height:58px;background:#fff;border-bottom:1px solid #dcdcdc"></div>
<div class="a" style="left:29.0px;top:21.8px;width:19px;height:19px;border-radius:2px;border:2px solid #666"></div>
<div class="t" style="left:76px;top:18.8px;line-height:22px;font-size:16.3px;color:#222">Nico Müller</div>
<div class="a" style="left:303px;top:8.8px;width:198px;height:42px;border:1px solid #d9d9d9;border-radius:6px"></div>
<svg class="a" style="left:315px;top:19.09999999999991px" width="18" height="17.5" viewBox="0 0 20 20" preserveAspectRatio="none"><path fill="#111" d="M18 0H2C.9 0 0 .9 0 2v18l4-4h14c1.1 0 2-.9 2-2V2c0-1.1-.9-2-2-2zM7 9H5V7h2v2zm4 0H9V7h2v2zm4 0h-2V7h2v2z"/></svg>
<div class="t" style="left:352px;top:15.4px;line-height:22px;font-size:16.3px;color:#222">Private SMS</div>
<svg class="a" style="left:474px;top:24.8px" width="12" height="6" viewBox="0 0 10 5"><path fill="#666" d="M0 0l5 5 5-5z"/></svg>
<div class="a" style="left:530px;top:11.8px;width:210px;height:37px;border:1px solid #d9d9d9;border-radius:5px 0 0 5px;overflow:hidden"><div class="a" style="left:118px;top:-1px;width:92px;height:37px;background:#e5e5e5;border-left:1px solid #d0d0d0"></div></div>
<div class="t" style="left:522px;width:100px;text-align:right;top:18.8px;line-height:22px;font-size:16.3px;color:#222">5</div>
<div class="t" style="left:660px;top:18.8px;line-height:22px;font-size:16.8px;color:#222">Minute</div>
<svg class="a" style="left:721px;top:26.8px" width="12" height="6" viewBox="0 0 10 5"><path fill="#666" d="M0 0l5 5 5-5z"/></svg>
<div class="a" style="left:761px;top:21.8px;width:5px;height:5px;border-radius:50%;background:#111"></div>
<div class="a" style="left:761px;top:28.9px;width:5px;height:5px;border-radius:50%;background:#111"></div>
<div class="a" style="left:761px;top:36.0px;width:5px;height:5px;border-radius:50%;background:#111"></div>
<div class="a" style="left:0;top:116px;width:815px;height:57px;background:#fff;border-bottom:1px solid #dcdcdc"></div>
<div class="a" style="left:29.0px;top:137.3px;width:19px;height:19px;border-radius:2px;border:2px solid #666"></div>
<div class="t" style="left:76px;top:134.3px;line-height:22px;font-size:16.3px;color:#222">Robert</div>
<div class="a" style="left:303px;top:124.3px;width:198px;height:42px;border:1px solid #d9d9d9;border-radius:6px"></div>
<svg class="a" style="left:315px;top:136.29999999999995px" width="18" height="14.5" viewBox="0 0 20 16" preserveAspectRatio="none"><path fill="#111" d="M18 0H2C.9 0 0 .9 0 2v12c0 1.1.9 2 2 2h16c1.1 0 2-.9 2-2V2c0-1.1-.9-2-2-2zm0 4l-8 5-8-5V2l8 5 8-5v2z"/></svg>
<div class="t" style="left:352px;top:130.9px;line-height:22px;font-size:16.3px;color:#222">Business Mail</div>
<svg class="a" style="left:474px;top:140.3px" width="12" height="6" viewBox="0 0 10 5"><path fill="#666" d="M0 0l5 5 5-5z"/></svg>
<div class="a" style="left:530px;top:127.3px;width:210px;height:37px;border:1px solid #d9d9d9;border-radius:5px 0 0 5px;overflow:hidden"><div class="a" style="left:118px;top:-1px;width:92px;height:37px;background:#e5e5e5;border-left:1px solid #d0d0d0"></div></div>
<div class="t" style="left:522px;width:100px;text-align:right;top:134.3px;line-height:22px;font-size:16.3px;color:#222">1</div>
<div class="t" style="left:660px;top:134.3px;line-height:22px;font-size:16.8px;color:#222">Minute</div>
<svg class="a" style="left:721px;top:142.3px" width="12" height="6" viewBox="0 0 10 5"><path fill="#666" d="M0 0l5 5 5-5z"/></svg>
<div class="a" style="left:761px;top:137.3px;width:5px;height:5px;border-radius:50%;background:#111"></div>
<div class="a" style="left:761px;top:144.4px;width:5px;height:5px;border-radius:50%;background:#111"></div>
<div class="a" style="left:761px;top:151.5px;width:5px;height:5px;border-radius:50%;background:#111"></div>
<div class="a" style="left:0;top:231px;width:815px;height:59px;background:#fff;border-bottom:1px solid #dcdcdc"></div>
<div class="a" style="left:29.0px;top:253.3px;width:19px;height:19px;border-radius:2px;border:2px solid #666"></div>
<div class="t" style="left:76px;top:250.3px;line-height:22px;font-size:16.3px;color:#222">Max Meier</div>
<div class="a" style="left:303px;top:240.3px;width:198px;height:42px;border:1px solid #d9d9d9;border-radius:6px"></div>
<svg class="a" style="left:313px;top:254.79999999999995px" width="22" height="10" viewBox="0 0 22 10"><g fill="none" stroke="#111" stroke-width="1.9"><circle cx="4.4" cy="4.4" r="3.5"/><circle cx="17.6" cy="4.4" r="3.5"/><path d="M4.4 7.9H17.6"/></g></svg>
<div class="t" style="left:352px;top:246.9px;line-height:22px;font-size:16.3px;color:#222">Anruf</div>
<svg class="a" style="left:474px;top:256.3px" width="12" height="6" viewBox="0 0 10 5"><path fill="#666" d="M0 0l5 5 5-5z"/></svg>
<div class="a" style="left:530px;top:243.3px;width:210px;height:37px;border:1px solid #d9d9d9;border-radius:5px 0 0 5px;overflow:hidden"><div class="a" style="left:118px;top:-1px;width:92px;height:37px;background:#e5e5e5;border-left:1px solid #d0d0d0"></div></div>
<div class="t" style="left:522px;width:100px;text-align:right;top:250.3px;line-height:22px;font-size:16.3px;color:#222">1</div>
<div class="t" style="left:660px;top:250.3px;line-height:22px;font-size:16.8px;color:#222">Minute</div>
<svg class="a" style="left:721px;top:258.3px" width="12" height="6" viewBox="0 0 10 5"><path fill="#666" d="M0 0l5 5 5-5z"/></svg>
<div class="a" style="left:761px;top:253.3px;width:5px;height:5px;border-radius:50%;background:#111"></div>
<div class="a" style="left:761px;top:260.4px;width:5px;height:5px;border-radius:50%;background:#111"></div>
<div class="a" style="left:761px;top:267.5px;width:5px;height:5px;border-radius:50%;background:#111"></div>
</div>
<div class="a" style="left:835px;top:49px;width:11px;height:357px;border-radius:5px;background:#e3e3e3"></div>
<div class="a" style="left:835px;top:49px;width:11px;height:307px;border-radius:5px;background:#b3b3b3"></div>
<div class="a" style="left:770px;top:331px;width:47px;height:47px;border-radius:50%;background:#4fdfbf;box-shadow:0 3px 9px rgba(0,0,0,.28)">
<div class="a" style="left:13.9px;top:21px;width:5px;height:5px;border-radius:50%;background:#111"></div>
<div class="a" style="left:21.0px;top:21px;width:5px;height:5px;border-radius:50%;background:#111"></div>
<div class="a" style="left:28.1px;top:21px;width:5px;height:5px;border-radius:50%;background:#111"></div>
</div>
</div>
</body></html>
